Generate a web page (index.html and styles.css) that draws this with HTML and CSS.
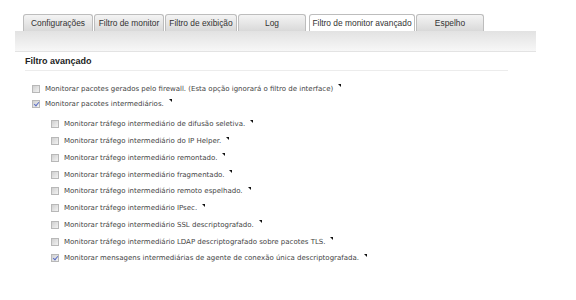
FILE: index.html
```html
<!DOCTYPE html>
<html lang="pt">
<head>
    <meta charset="UTF-8">
    <title>Filtro de monitor avançado</title>
    <link rel="stylesheet" href="styles.css">
</head>
<body>

<div class="page">
    <ul class="tabs">
        <li class="tab w70">Configurações</li>
        <li class="tab w70">Filtro de monitor</li>
        <li class="tab w72">Filtro de exibição</li>
        <li class="tab w68">Log</li>
        <li class="tab active w106">Filtro de monitor avançado</li>
        <li class="tab w68">Espelho</li>
    </ul>
    <div class="toolbar"></div>

    <div class="section">
        <h3 class="section-title">Filtro avançado</h3>

        <div class="options">
            <label class="opt"><span class="box"></span>Monitorar pacotes gerados pelo firewall. (Esta opção ignorará o filtro de interface)<i class="tip"></i></label>
            <label class="opt"><span class="box checked"></span>Monitorar pacotes intermediários.<i class="tip"></i></label>

            <div class="sub">
                <label class="opt"><span class="box"></span>Monitorar tráfego intermediário de difusão seletiva.<i class="tip"></i></label>
                <label class="opt"><span class="box"></span>Monitorar tráfego intermediário do IP Helper.<i class="tip"></i></label>
                <label class="opt"><span class="box"></span>Monitorar tráfego intermediário remontado.<i class="tip"></i></label>
                <label class="opt"><span class="box"></span>Monitorar tráfego intermediário fragmentado.<i class="tip"></i></label>
                <label class="opt"><span class="box"></span>Monitorar tráfego intermediário remoto espelhado.<i class="tip"></i></label>
                <label class="opt"><span class="box"></span>Monitorar tráfego intermediário IPsec.<i class="tip"></i></label>
                <label class="opt"><span class="box"></span>Monitorar tráfego intermediário SSL descriptografado.<i class="tip"></i></label>
                <label class="opt"><span class="box"></span>Monitorar tráfego intermediário LDAP descriptografado sobre pacotes TLS.<i class="tip"></i></label>
                <label class="opt"><span class="box checked"></span>Monitorar mensagens intermediárias de agente de conexão única descriptografada.<i class="tip"></i></label>
            </div>
        </div>
    </div>
</div>

</body>
</html>
```

FILE: styles.css
```css
body {
    margin: 0;
    background: #fff;
    font-family: "DejaVu Sans", Verdana, sans-serif;
    color: #333;
}
.page {
    padding: 14px 40px 0 15px;
}
.tabs {
    list-style: none;
    margin: 0;
    padding: 0 0 0 8px;
    display: flex;
    gap: 1px;
    height: 17px;
}
.tab {
    box-sizing: border-box;
    height: 17px;
    border: 1px solid #bdbdbd;
    border-bottom: none;
    border-radius: 3px 3px 0 0;
    background: linear-gradient(#f4f4f4, #d9d9d9);
    font-family: "Liberation Sans", Arial, sans-serif;
    font-size: 8.4px;
    color: #333;
    text-align: center;
    line-height: 16px;
    white-space: nowrap;
}
.tab.active {
    background: #fff;
    margin-left: 2px;
}
.w68 { width: 68px; }
.w70 { width: 70px; }
.w72 { width: 72px; }
.w106 { width: 106px; }
.toolbar {
    height: 20px;
    background: linear-gradient(#e2e2e2, #f7f7f7);
    border-bottom: 1px solid #e3e3e3;
}
.section {
    padding: 4px 0 0 10px;
}
.section-title {
    margin: 0 28px 0 0;
    padding: 0 0 4px 0;
    font-family: "Liberation Sans", Arial, sans-serif;
    font-size: 9px;
    font-weight: bold;
    color: #222;
    border-bottom: 1px solid #ececec;
}
.options {
    padding: 10px 0 0 7px;
    font-size: 7px;
    color: #444;
}
.opt {
    display: flex;
    align-items: center;
    height: 15px;
    white-space: nowrap;
}
.box {
    box-sizing: border-box;
    width: 8px;
    height: 8px;
    margin-right: 5px;
    border: 1px solid #b8b8b8;
    background: linear-gradient(135deg, #d0d0d0, #f2f2f2);
    position: relative;
}
.box.checked::after {
    content: "";
    position: absolute;
    left: 2px;
    top: 0;
    width: 2px;
    height: 4px;
    border: solid #5b6ec4;
    border-width: 0 1px 1px 0;
    transform: rotate(40deg);
}
.tip {
    display: inline-block;
    width: 0;
    height: 0;
    margin: -6px 0 0 5px;
    border-top: 3px solid #111;
    border-left: 3px solid transparent;
}
.sub {
    padding: 5px 0 0 19px;
}
.sub .opt {
    height: 16.75px;
}
```
